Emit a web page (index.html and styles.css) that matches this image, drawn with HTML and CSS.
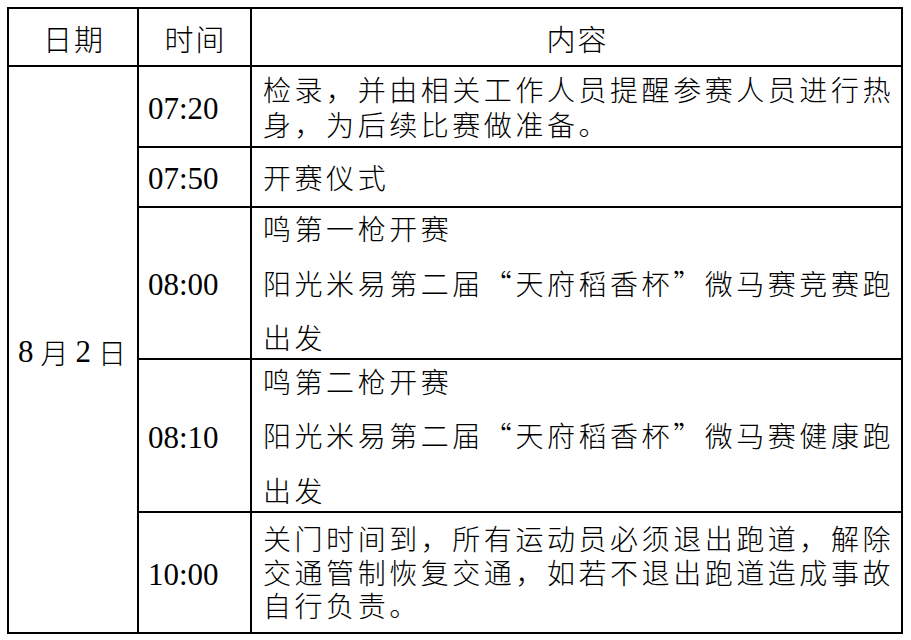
FILE: index.html
```html
<!DOCTYPE html>
<html lang="zh-CN">
<head>
<meta charset="utf-8">
<title>赛程安排</title>
<link rel="stylesheet" href="styles.css">
</head>
<body>
<div class="sheet">
  <div class="cell head">日期</div>
  <div class="cell head">时间</div>
  <div class="cell head">内容</div>

  <div class="cell date"><span class="num">8</span><span class="cjk">月</span><span class="num">2</span><span class="cjk">日</span></div>

  <div class="cell time r1">07:20</div>
  <div class="cell text r1 lh35">检录，并由相关工作人员提醒参赛人员进行热<br>身，为后续比赛做准备。</div>

  <div class="cell time r2">07:50</div>
  <div class="cell text r2 lh35">开赛仪式</div>

  <div class="cell time r3">08:00</div>
  <div class="cell text r3 lh54">鸣第一枪开赛<br>阳光米易第二届“天府稻香杯”微马赛竞赛跑<br>出发</div>

  <div class="cell time r4">08:10</div>
  <div class="cell text r4 lh54">鸣第二枪开赛<br>阳光米易第二届“天府稻香杯”微马赛健康跑<br>出发</div>

  <div class="cell time r5">10:00</div>
  <div class="cell text r5 lh33">关门时间到，所有运动员必须退出跑道，解除<br>交通管制恢复交通，如若不退出跑道造成事故<br>自行负责。</div>
</div>
</body>
</html>
```

FILE: styles.css
```css
html, body {
  margin: 0;
  padding: 0;
  background: #ffffff;
}

body {
  font-family: "Liberation Serif", "Noto Sans CJK SC", serif;
  color: #000000;
}

.sheet {
  display: grid;
  grid-template-columns: 130px 113px 651px;
  grid-template-rows: 58px 81px 60px 152px 153px 121px;
  width: max-content;
  margin: 7px 0 0 7px;
  border-top: 2px solid #000;
  border-left: 2px solid #000;
}

.cell {
  box-sizing: border-box;
  border-right: 2px solid #000;
  border-bottom: 2px solid #000;
  display: flex;
  flex-direction: column;
  justify-content: center;
  min-width: 0;
}

.head {
  align-items: center;
  font-family: "Noto Sans CJK SC", sans-serif;
  font-weight: 300;
  font-size: 29px;
  letter-spacing: 2px;
  line-height: 1;
  padding-top: 2px;
  padding-left: 2px;
}

.date {
  grid-column: 1;
  grid-row: 2 / 7;
  flex-direction: row;
  align-items: center;
  justify-content: center;
  padding-right: 3px;
  padding-top: 4px;
}

.date .num {
  font-family: "Liberation Serif", serif;
  font-size: 31px;
  margin: 0 4px;
}

.date .cjk {
  font-family: "Noto Sans CJK SC", sans-serif;
  font-weight: 300;
  font-size: 28px;
  margin: 0 3px;
}

.time {
  grid-column: 2;
  font-size: 31px;
  line-height: 1;
  padding-left: 9px;
  padding-top: 3px;
}

.text {
  grid-column: 3;
  font-family: "Noto Sans CJK SC", sans-serif;
  font-weight: 300;
  font-size: 28px;
  letter-spacing: 3.55px;
  white-space: nowrap;
  padding-left: 11px;
}

.r1 { grid-row: 2; }
.r2 { grid-row: 3; }
.r3 { grid-row: 4; }
.r4 { grid-row: 5; }
.r5 { grid-row: 6; }

.lh35 { line-height: 35px; }
.lh54 { line-height: 54.5px; }
.lh33 { line-height: 33.5px; }
```
